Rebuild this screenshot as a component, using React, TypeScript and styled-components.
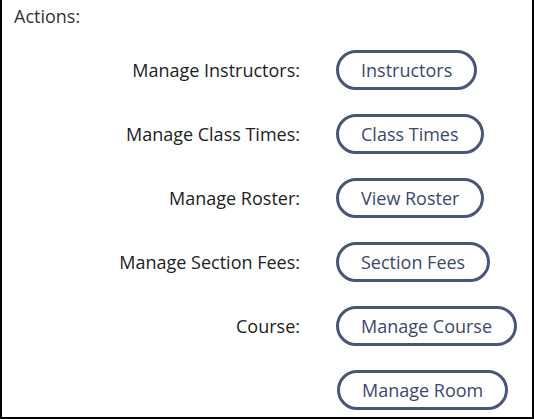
import React from "react";
import styled, { createGlobalStyle } from "styled-components";

const Global = createGlobalStyle`
  html, body { margin: 0; padding: 0; background: #fff; }
  body { font-family: "Open Sans", "Liberation Sans", sans-serif; }
`;

const Panel = styled.div`
  box-sizing: border-box;
  width: 534px;
  height: 419px;
  border-left: 2px solid #000;
  border-right: 2px solid #000;
  border-bottom: 2px solid #000;
  background: #fff;
  padding: 4px 0 0 12px;
`;

const Heading = styled.div`
  font-size: 18px;
  line-height: 24px;
  color: #333;
`;

const Grid = styled.div`
  display: grid;
  grid-template-columns: 286px auto;
  column-gap: 36px;
  row-gap: 24px;
  margin-top: 22px;
  align-items: center;
  justify-items: start;
`;

const Label = styled.div`
  justify-self: end;
  font-size: 18px;
  line-height: 24px;
  color: #222;
`;

const ActionButton = styled.button<{ $shift?: number }>`
  box-sizing: border-box;
  height: 40px;
  padding: 0 22px;
  border: 3px solid #4b5676;
  border-radius: 20px;
  background: #fff;
  color: #3d4868;
  font-family: "Open Sans", "Liberation Sans", sans-serif;
  font-size: 18px;
  line-height: 24px;
  cursor: pointer;
  margin-left: ${(p) => p.$shift ?? 0}px;
`;

const rows: { label: string; button: string; shift?: number }[] = [
  { label: "Manage Instructors:", button: "Instructors" },
  { label: "Manage Class Times:", button: "Class Times" },
  { label: "Manage Roster:", button: "View Roster" },
  { label: "Manage Section Fees:", button: "Section Fees" },
  { label: "Course:", button: "Manage Course" },
  { label: "", button: "Manage Room", shift: 1 },
];

export default function App() {
  return (
    <>
      <Global />
      <Panel>
        <Heading>Actions:</Heading>
        <Grid>
          {rows.map((r) => (
            <React.Fragment key={r.button}>
              <Label>{r.label}</Label>
              <ActionButton $shift={r.shift}>{r.button}</ActionButton>
            </React.Fragment>
          ))}
        </Grid>
      </Panel>
    </>
  );
}
